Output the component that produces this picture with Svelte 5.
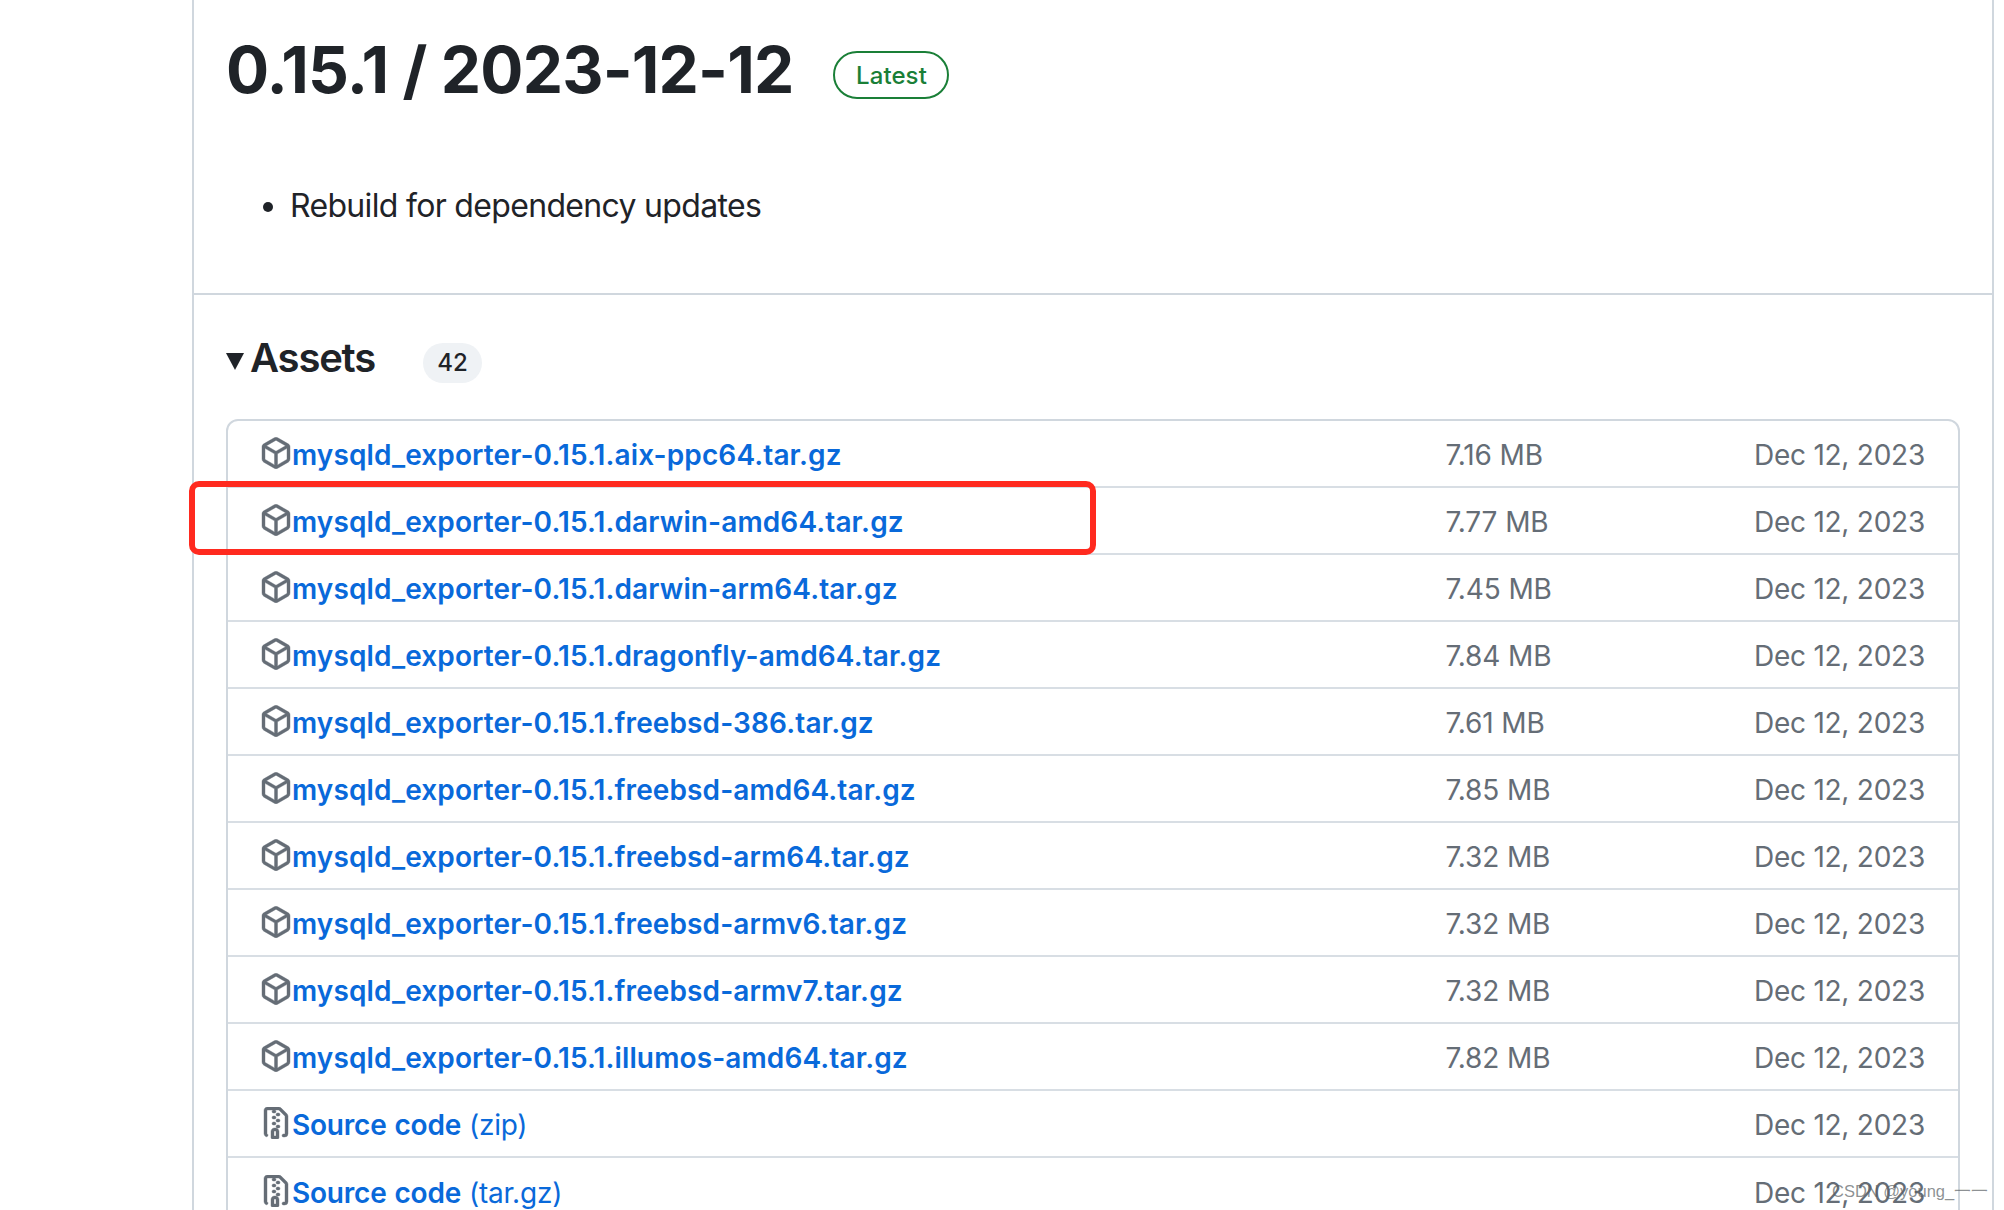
<script>
  const pkg = "m8.878.392 5.25 3.045c.54.314.872.89.872 1.514v6.098a1.75 1.75 0 0 1-.872 1.514l-5.25 3.045a1.75 1.75 0 0 1-1.756 0l-5.25-3.045A1.75 1.75 0 0 1 1 11.049V4.951c0-.624.332-1.201.872-1.514L7.122.392a1.75 1.75 0 0 1 1.756 0ZM7.875 1.69l-4.63 2.685L8 7.133l4.755-2.758-4.63-2.685a.248.248 0 0 0-.25 0ZM2.5 5.677v5.372c0 .09.047.171.125.216l4.625 2.683V8.432Zm6.25 8.271 4.625-2.683a.25.25 0 0 0 .125-.216V5.677L8.75 8.432Z";
  const zip = "M3.5 1.75v11.5c0 .09.048.173.126.217a.75.75 0 0 1-.752 1.298A1.748 1.748 0 0 1 2 13.25V1.75C2 .784 2.784 0 3.75 0h5.586c.464 0 .909.185 1.237.513l2.914 2.914c.329.328.513.773.513 1.237v8.586A1.75 1.75 0 0 1 12.25 15h-.5a.75.75 0 0 1 0-1.5h.5a.25.25 0 0 0 .25-.25V4.664a.25.25 0 0 0-.073-.177L9.513 1.573a.25.25 0 0 0-.177-.073H7.25a.75.75 0 0 1 0 1.5h-.5a.75.75 0 0 1 0-1.5h-3a.25.25 0 0 0-.25.25Zm3.75 8.75h.5c.966 0 1.75.784 1.75 1.75v3a.75.75 0 0 1-.75.75h-2.5a.75.75 0 0 1-.75-.75v-3c0-.966.784-1.75 1.75-1.75ZM6 5.25a.75.75 0 0 1 .75-.75h.5a.75.75 0 0 1 0 1.5h-.5A.75.75 0 0 1 6 5.25Zm.75 2.25h.5a.75.75 0 0 1 0 1.5h-.5a.75.75 0 0 1 0-1.5ZM8 6.75A.75.75 0 0 1 8.75 6h.5a.75.75 0 0 1 0 1.5h-.5A.75.75 0 0 1 8 6.75ZM8.75 3h.5a.75.75 0 0 1 0 1.5h-.5a.75.75 0 0 1 0-1.5ZM8 9.75A.75.75 0 0 1 8.75 9h.5a.75.75 0 0 1 0 1.5h-.5A.75.75 0 0 1 8 9.75Zm-1 2.5v2.25h1v-2.25a.25.25 0 0 0-.25-.25h-.5a.25.25 0 0 0-.25.25Z";
  const assets = [
    ["aix-ppc64", "7.16 MB"],
    ["darwin-amd64", "7.77 MB"],
    ["darwin-arm64", "7.45 MB"],
    ["dragonfly-amd64", "7.84 MB"],
    ["freebsd-386", "7.61 MB"],
    ["freebsd-amd64", "7.85 MB"],
    ["freebsd-arm64", "7.32 MB"],
    ["freebsd-armv6", "7.32 MB"],
    ["freebsd-armv7", "7.32 MB"],
    ["illumos-amd64", "7.82 MB"],
  ];
</script>

<div class="page">
  <main class="release">
    <section class="head">
      <div class="title-row">
        <h1>0.15.1 / 2023-12-12</h1>
        <span class="latest">Latest</span>
      </div>
      <ul><li>Rebuild for dependency updates</li></ul>
    </section>
    <section class="assets">
      <div class="assets-head">
        <span class="tri"></span>
        <h2>Assets</h2>
        <span class="count">42</span>
      </div>
      <div class="box">
        {#each assets as [name, size]}
          <div class="row">
            <svg class="icon" viewBox="0 0 16 16"><path d={pkg}></path></svg>
            <a class="name" href="#a">mysqld_exporter-0.15.1.{name}.tar.gz</a>
            <span class="size">{size}</span>
            <span class="date">Dec 12, 2023</span>
          </div>
        {/each}
        <div class="row">
          <svg class="icon" viewBox="0 0 16 16"><path d={zip}></path></svg>
          <a class="name source" href="#a">Source code <span class="paren">(zip)</span></a>
          <span class="size"></span>
          <span class="date">Dec 12, 2023</span>
        </div>
        <div class="row">
          <svg class="icon" viewBox="0 0 16 16"><path d={zip}></path></svg>
          <a class="name source" href="#a">Source code <span class="paren">(tar.gz)</span></a>
          <span class="size"></span>
          <span class="date">Dec 12, 2023</span>
        </div>
      </div>
    </section>
  </main>
  <div class="highlight"></div>
  <div class="watermark">CSDN @young_一一</div>
</div>

<style>
  :global(body) { margin: 0; background: #fff; }
  .page {
    position: relative;
    width: 2004px;
    height: 1210px;
    overflow: hidden;
    font-family: Inter, "Liberation Sans", sans-serif;
    color: #1f2328;
    background: #fff;
  }
  .release {
    margin-left: 192px;
    width: 1802px;
    height: 1210px;
    box-sizing: border-box;
    border-left: 2px solid #d0d7de;
    border-right: 2px solid #d0d7de;
  }
  .head {
    height: 295px;
    box-sizing: border-box;
    padding: 34px 32px 0;
    border-bottom: 2px solid #d0d7de;
  }
  .title-row { display: flex; align-items: center; gap: 40px; height: 76px; }
  h1 { margin: -4px 0 0; font-size: 64px; line-height: 76px; font-weight: 700; letter-spacing: -0.82px; }
  .latest {
    display: flex; align-items: center; justify-content: center;
    width: 116px; height: 48px; box-sizing: border-box; margin-top: 6px;
    border: 2px solid #1a7f37; border-radius: 24px;
    color: #1a7f37; font-size: 24px; font-weight: 500; letter-spacing: 0.1px;
  }
  ul { margin: 74px 0 0; padding-left: 64px; font-size: 32px; line-height: 44px; letter-spacing: -0.68px; }
  .assets { padding: 38px 32px 0; }
  .assets-head { display: flex; align-items: center; height: 50px; }
  .tri {
    width: 0; height: 0; margin-top: 7px;
    border-left: 9px solid transparent; border-right: 9px solid transparent;
    border-top: 17px solid #1f2328;
  }
  h2 { margin: 0 0 0 6px; font-size: 40px; line-height: 50px; font-weight: 600; letter-spacing: -1.2px; }
  .count {
    margin-left: 48px; margin-top: 9px; width: 59px; height: 40px;
    display: flex; align-items: center; justify-content: center;
    border-radius: 20px; background: #eff2f5; font-size: 24px; font-weight: 500;
  }
  .box {
    margin-top: 36px; width: 1734px; box-sizing: border-box;
    border: 2px solid #d0d7de; border-radius: 12px;
  }
  .row {
    display: flex; align-items: center; height: 67px; box-sizing: border-box;
    padding: 2px 34px 0 32px;
    border-bottom: 2px solid #d8dee4;
    font-size: 28px;
  }
  .row:last-child { border-bottom: 0; }
  .icon { width: 32px; height: 32px; flex: none; fill: #656d76; stroke: #656d76; stroke-width: 0.2; margin-top: -4px; }
  .name { flex: 1; color: #0969da; font-weight: 600; text-decoration: none; letter-spacing: 0.12px; white-space: nowrap; }
  .source { letter-spacing: -0.2px; word-spacing: 1px; }
  .paren { font-weight: 400; letter-spacing: -0.2px; }
  .size { width: 308.5px; color: #656d76; letter-spacing: -0.1px; white-space: nowrap; }
  .date { width: 170px; flex: none; text-align: right; color: #656d76; white-space: nowrap; letter-spacing: -0.25px; }
  .highlight {
    position: absolute; left: 189px; top: 481px; width: 907px; height: 74px;
    box-sizing: border-box; border: 6px solid #ff2a1f; border-radius: 10px;
  }
  .watermark {
    position: absolute; left: 1832px; top: 1180px;
    font-size: 16.5px; line-height: 22px; color: rgba(90,95,100,0.7); white-space: nowrap;
    font-family: "Liberation Sans", sans-serif;
  }
</style>
